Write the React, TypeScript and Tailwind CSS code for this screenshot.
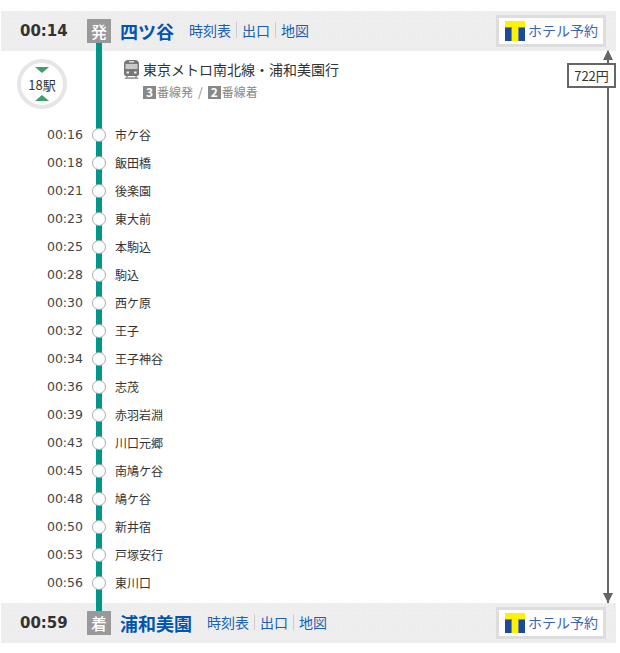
const stops = [
  ["00:16", "市ケ谷"],
  ["00:18", "飯田橋"],
  ["00:21", "後楽園"],
  ["00:23", "東大前"],
  ["00:25", "本駒込"],
  ["00:28", "駒込"],
  ["00:30", "西ケ原"],
  ["00:32", "王子"],
  ["00:34", "王子神谷"],
  ["00:36", "志茂"],
  ["00:39", "赤羽岩淵"],
  ["00:43", "川口元郷"],
  ["00:45", "南鳩ケ谷"],
  ["00:48", "鳩ケ谷"],
  ["00:50", "新井宿"],
  ["00:53", "戸塚安行"],
  ["00:56", "東川口"],
];

function TLogo() {
  return (
    <svg width="20" height="20" viewBox="0 0 20 20" className="shrink-0">
      <rect width="20" height="20" fill="#1a4a9c" />
      <rect y="6" width="20" height="1" fill="#7b8a8c" />
      <rect x="6" y="7" width="1" height="13" fill="#7b8a8c" />
      <rect x="13" y="7" width="1" height="13" fill="#7b8a8c" />
      <rect width="20" height="6" fill="#fff200" />
      <rect x="7" width="6" height="20" fill="#fff200" />
    </svg>
  );
}

function TrainIcon() {
  return (
    <svg width="15" height="19" viewBox="0 0 15 19" className="shrink-0">
      <path d="M4 0h7c2.200 0 4 1.500 4 3.500V14a2 2 0 0 1-2 2H2a2 2 0 0 1-2-2V3.500C0 1.500 1.800 0 4 0z" fill="#777" />
      <rect x="5" y="1" width="5" height="1.500" fill="#ddd" />
      <rect x="1.500" y="4" width="12" height="5" fill="#c9c9c9" />
      <rect x="2.500" y="11.500" width="2.500" height="2" fill="#eee" />
      <rect x="10" y="11.500" width="2.500" height="2" fill="#eee" />
      <path d="M2.500 16L0.500 19h14l-2-3h-1.500l0.500 1.200h-8l0.500-1.200z" fill="#999" />
    </svg>
  );
}

function HotelButton() {
  return (
    <div className="flex h-[32px] w-[110px] items-center gap-[3px] border-[3px] border-[#ddd] bg-white pl-[6px] text-[14px] text-[#3a65ad]">
      <TLogo />
      <span className="-translate-y-[1px]">ホテル予約</span>
    </div>
  );
}

function Links() {
  return (
    <div className="flex items-center text-[14px] text-[#1a5fb0]">
      <span className="border-r border-[#ccc] pr-[5px] leading-[16px]">時刻表</span>
      <span className="border-r border-[#ccc] px-[5px] leading-[16px]">出口</span>
      <span className="pl-[5px] leading-[16px]">地図</span>
    </div>
  );
}

function StationBar({ time, mark, name }: { time: string; mark: string; name: string }) {
  return (
    <div className="flex h-[40px] items-center bg-[#eeeeee] bg-[radial-gradient(#ebebeb_1px,transparent_1px)] bg-[length:5px_5px] pr-[10px]">
      <div className="w-[86px] pl-[19px] font-['DejaVu_Sans'] text-[15px] font-bold text-[#333]">{time}</div>
      <div className="relative z-10 flex h-[24px] w-[24px] items-center justify-center bg-[#999] text-[16px] font-medium text-white">{mark}</div>
      <div className="ml-[9px] text-[18px] font-bold leading-[24px] text-[#0055ad]">{name}</div>
      <div className="ml-[15px] -translate-y-[1px]">
        <Links />
      </div>
      <div className="ml-auto">
        <HotelButton />
      </div>
    </div>
  );
}

export default function App() {
  return (
    <div className="w-[620px] bg-white pb-[10px] pl-[1px] pr-[4px] pt-[11px] font-['Noto_Sans_CJK_JP',sans-serif] text-[#333]">
      <StationBar time="00:14" mark="発" name="四ツ谷" />

      <div className="relative">
        {/* line between the two stations */}
        <div className="absolute bottom-[-8px] left-[95px] top-[-8px] w-[6px] bg-[#009688]" />

        {/* fare arrow */}
        <div className="absolute bottom-0 right-[7px] top-0 w-[2px] bg-[#666]" />
        <div className="absolute right-[3px] top-[-1px] h-0 w-0 border-x-[5px] border-b-[10px] border-x-transparent border-b-[#666]" />
        <div className="absolute bottom-0 right-[3px] h-0 w-0 border-x-[5px] border-t-[10px] border-x-transparent border-t-[#666]" />
        <div className="absolute right-0 top-[12px] flex h-[25px] w-[49px] items-center justify-center border-2 border-[#666] bg-white text-[13px]">
          722円
        </div>

        <div className="flex h-[70px]">
          <div className="w-[86px] pl-[16px] pt-[8px]">
            <div className="flex h-[50px] w-[50px] flex-col items-center justify-between rounded-full border-[4px] border-[#e6e6e6] py-[4px]">
              <div className="h-0 w-0 border-x-[7px] border-t-[6px] border-x-transparent border-t-[#3f9e6d]" />
              <div className="text-[13px] leading-none">18駅</div>
              <div className="h-0 w-0 border-x-[7px] border-b-[6px] border-x-transparent border-b-[#3f9e6d]" />
            </div>
          </div>
          <div className="ml-[37px] pt-[9px]">
            <div className="flex items-start gap-[4px] text-[14px] leading-[20px]">
              <TrainIcon />
              <span className="-translate-y-px">東京メトロ南北線・浦和美園行</span>
            </div>
            <div className="ml-[19px] mt-[3px] flex items-center text-[12px] leading-[18px] text-[#888]">
              <span className="mr-[1px] flex h-[13px] w-[13px] items-center justify-center bg-[#888] font-bold text-white">3</span>
              <span>番線発</span>
              <span className="mx-[5px]">/</span>
              <span className="mr-[1px] flex h-[13px] w-[13px] items-center justify-center bg-[#888] font-bold text-white">2</span>
              <span>番線着</span>
            </div>
          </div>
        </div>

        <div className="pb-[6px]">
          {stops.map(([time, name]) => (
            <div key={name} className="relative flex h-[28px] items-center text-[12px]">
              <div className="w-[82px] text-right font-['DejaVu_Sans'] text-[12.500px] text-[#444]">{time}</div>
              <div className="relative ml-[9px] h-[14px] w-[14px] rounded-full border-[1.500px] border-[#aaa] bg-white" />
              <div className="ml-[9px]">{name}</div>
            </div>
          ))}
        </div>
      </div>

      <StationBar time="00:59" mark="着" name="浦和美園" />
    </div>
  );
}
